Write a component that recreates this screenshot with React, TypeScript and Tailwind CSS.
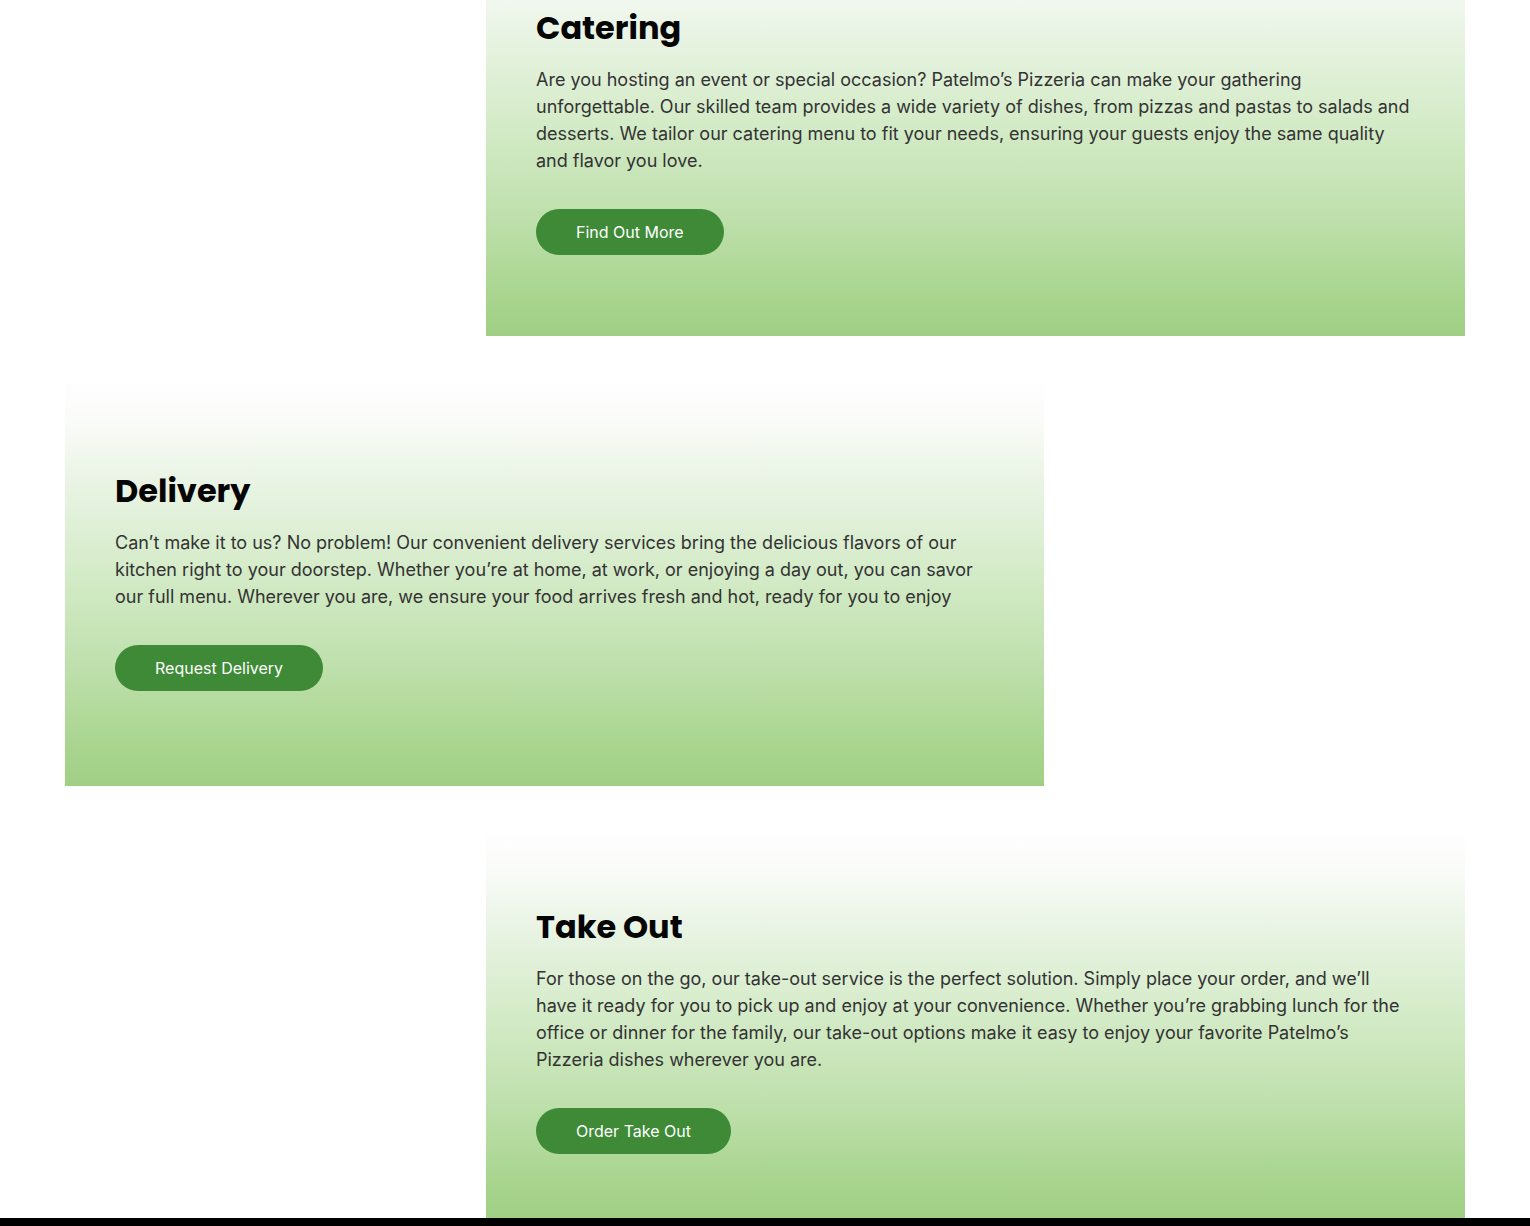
const services = [
  {
    title: "Catering",
    text: "Are you hosting an event or special occasion? Patelmo’s Pizzeria can make your gathering unforgettable. Our skilled team provides a wide variety of dishes, from pizzas and pastas to salads and desserts. We tailor our catering menu to fit your needs, ensuring your guests enjoy the same quality and flavor you love.",
    cta: "Find Out More",
    side: "right",
  },
  {
    title: "Delivery",
    text: "Can’t make it to us? No problem! Our convenient delivery services bring the delicious flavors of our kitchen right to your doorstep. Whether you’re at home, at work, or enjoying a day out, you can savor our full menu. Wherever you are, we ensure your food arrives fresh and hot, ready for you to enjoy",
    cta: "Request Delivery",
    side: "left",
  },
  {
    title: "Take Out",
    text: "For those on the go, our take-out service is the perfect solution. Simply place your order, and we’ll have it ready for you to pick up and enjoy at your convenience. Whether you’re grabbing lunch for the office or dinner for the family, our take-out options make it easy to enjoy your favorite Patelmo’s Pizzeria dishes wherever you are.",
    cta: "Order Take Out",
    side: "right",
  },
] as const;

function ServiceCard({ item, last }: { item: (typeof services)[number]; last: boolean }) {
  return (
    <div className={item.side === "right" ? "flex justify-end" : "flex justify-start"}>
      <div
        className={`flex w-[979px] flex-col justify-center bg-[linear-gradient(180deg,#fefefe_0%,#fbfcfa_8%,#ecf5e8_22%,#d6ecca_45%,#bfe0ad_70%,#a9d58f_90%,#a0cf84_100%)] px-[50px] ${
          last ? "h-[385px] pt-[8px]" : "h-[403px] pb-[8px]"
        }`}
      >
        <h2 className="font-['Poppins','Open_Sans',sans-serif] text-[32px] font-bold leading-[41px] text-[#050505]">
          {item.title}
        </h2>
        <p className="mt-[18px] font-['Inter',sans-serif] text-[18px] leading-[27px] text-[#333333]">
          {item.text}
        </p>
        <div className="mt-[35px]">
          <button className="h-[46px] rounded-full bg-[#3e8a37] px-10 font-['Inter',sans-serif] text-[16px] text-white">
            {item.cta}
          </button>
        </div>
      </div>
    </div>
  );
}

export default function App() {
  return (
    <div className="min-h-[1226px] overflow-hidden bg-white">
      <div className="-mt-[67px] flex flex-col gap-[47px] px-[65px]">
        {services.map((s, i) => (
          <ServiceCard key={s.title} item={s} last={i === services.length - 1} />
        ))}
      </div>
      <footer className="h-[60px] bg-black" />
    </div>
  );
}
